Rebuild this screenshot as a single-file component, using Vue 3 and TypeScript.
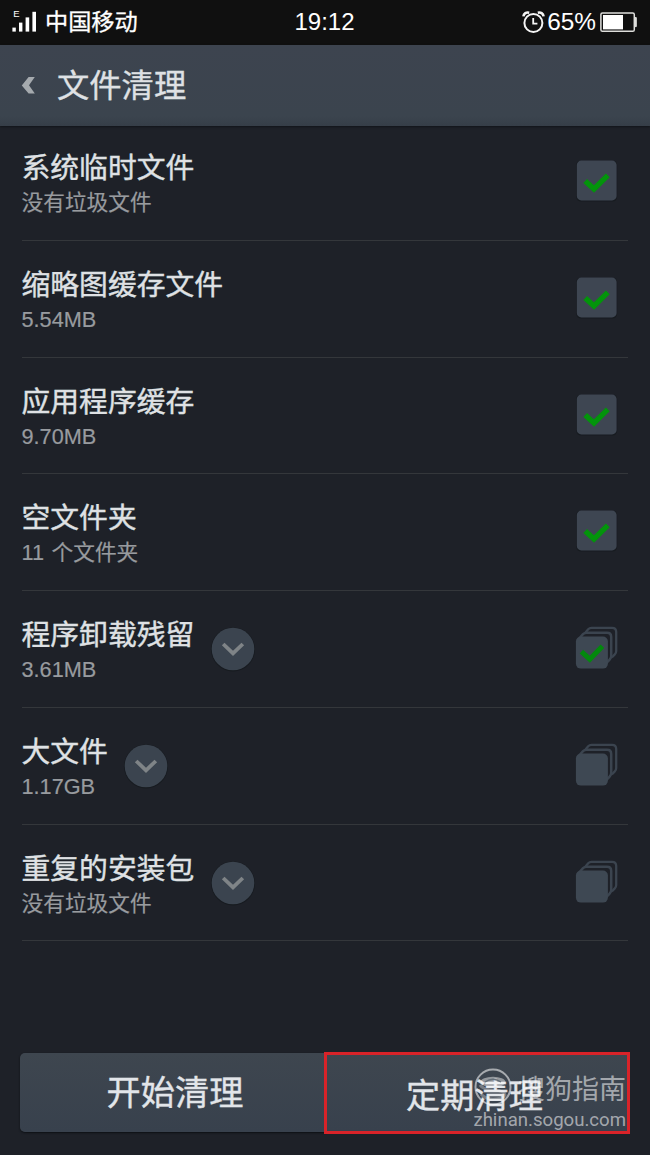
<script setup lang="ts">
interface CleanItem {
  title: string
  detail: string
  expandable: boolean
  checked: boolean
}

const items: CleanItem[] = [
  { title: '系统临时文件', detail: '没有垃圾文件', expandable: false, checked: true },
  { title: '缩略图缓存文件', detail: '5.54MB', expandable: false, checked: true },
  { title: '应用程序缓存', detail: '9.70MB', expandable: false, checked: true },
  { title: '空文件夹', detail: '11 个文件夹', expandable: false, checked: true },
  { title: '程序卸载残留', detail: '3.61MB', expandable: true, checked: true },
  { title: '大文件', detail: '1.17GB', expandable: true, checked: false },
  { title: '重复的安装包', detail: '没有垃圾文件', expandable: true, checked: false },
]
</script>

<template>
  <div class="screen">
    <header class="status">
      <div class="carrier">
        <svg class="signal" width="26" height="26" viewBox="0 0 26 26">
          <text x="2.2" y="8.4" class="network">E</text>
          <rect x="1.4" y="18.6" width="3.4" height="4" />
          <rect x="8" y="13.6" width="3.4" height="9" />
          <rect x="14.6" y="8.4" width="3.6" height="14.2" />
          <rect x="21.4" y="2.8" width="3.6" height="19.8" />
        </svg>
        <span>中国移动</span>
      </div>
      <span class="clock">19:12</span>
      <div class="power">
        <svg width="24" height="24" viewBox="0 0 24 24" fill="none" stroke="#f4f4f4">
          <circle cx="11.4" cy="13" r="9" stroke-width="2" />
          <path d="M11.2 8V13.6H15.4" stroke-width="1.8" />
          <path d="M1.4 6.4C1.8 3.4 4.2 2 7.2 2.7M21.6 6.4C21.2 3.4 18.8 2 15.8 2.7" stroke-width="2.6" />
        </svg>
        <span class="percent">65%</span>
        <svg class="battery" width="38" height="21" viewBox="0 0 38 21">
          <rect x="0.9" y="0.9" width="33.4" height="18.4" rx="1.6" fill="none" stroke="#dededb" stroke-width="1.5" />
          <rect x="3" y="3" width="20" height="14.4" fill="#fff" />
          <path d="M35 5.6H36.3V14.6H35Z" fill="#dededb" stroke="#dededb" stroke-width="1" />
        </svg>
      </div>
    </header>

    <nav class="titlebar">
      <svg width="16" height="20" viewBox="0 0 16 20">
        <path d="M7.6 1H13.8L8 9.2L13.8 17.6H7.6L0.8 9.4Z" fill="#a5aaae" />
      </svg>
      <h1>文件清理</h1>
    </nav>

    <main class="list">
      <section v-for="item in items" :key="item.title" class="row">
        <div class="copy">
          <h2>{{ item.title }}</h2>
          <p>{{ item.detail }}</p>
        </div>
        <svg v-if="item.expandable" class="expand" width="46" height="46" viewBox="0 0 46 46">
          <circle cx="23" cy="23.4" r="22" fill="#171b20" />
          <circle cx="23" cy="23" r="21.3" fill="#3b444f" />
          <path d="M13.2 18L23 27.4L32.8 18" fill="none" stroke="#7f8487" stroke-width="3.8" />
        </svg>
        <svg v-if="!item.expandable" class="check" width="44" height="44" viewBox="0 0 44 44">
          <rect x="1.2" y="1.4" width="41" height="41.2" rx="5" fill="#171b20" />
          <rect x="1.8" y="1.6" width="39.8" height="39.8" rx="4.5" fill="#3e4652" />
          <path d="M10.2 22L19 30L32.8 16.4" fill="none" stroke="#03940b" stroke-width="5.4" />
        </svg>
        <svg v-else class="check" width="44" height="44" viewBox="0 0 44 44">
          <path d="M10.5 6.5L13.2 3.2Q14.5 1.8 16.5 1.8H37Q41.2 1.8 41.2 6V25Q41.2 27 39.8 28.4L36.8 31.5" fill="none" stroke="#3b444f" stroke-width="2.3" />
          <path d="M5 11.5L8 8.2Q9.5 6.8 11.5 6.8H32Q36.2 6.8 36.2 11V30Q36.2 32 34.8 33.4L31.5 37" fill="none" stroke="#3b444f" stroke-width="2.5" />
          <rect x="0.9" y="10.6" width="32" height="32" rx="5" fill="#3e4853" />
          <path v-if="item.checked" d="M6.4 25.6L14.8 33.2L27.4 20.2" fill="none" stroke="#03890d" stroke-width="5" />
        </svg>
      </section>
    </main>

    <footer class="actions">
      <button class="start">开始清理</button>
      <button class="schedule">定期清理</button>
      <div class="watermark">
        <div class="brand">
          <svg width="38" height="38" viewBox="0 0 38 38">
            <circle cx="19" cy="19" r="17.5" fill="none" stroke="#fff" stroke-opacity="0.55" stroke-width="2" />
            <ellipse cx="19" cy="14" rx="12.5" ry="5.2" fill="#fff" fill-opacity="0.45" />
            <path d="M11 14Q19 8.5 27 14" fill="none" stroke="#646e78" stroke-width="1.5" />
            <path d="M6 17Q9 22 20 22Q31 23 31 27Q29 31 19 31Q11 31 7 26" fill="none" stroke="#fff" stroke-opacity="0.3" stroke-width="3" />
          </svg>
          <span>搜狗指南</span>
        </div>
        <div class="site">zhinan.sogou.com</div>
      </div>
    </footer>
  </div>
</template>

<style>
body {
  margin: 0;
  background: #1e2128;
}
</style>

<style scoped>
.screen {
  display: flex;
  flex-direction: column;
  width: 650px;
  height: 1155px;
  overflow: hidden;
  background: #1e2128;
  color: #dfe1e4;
  font-family: "Liberation Sans", "Noto Sans CJK SC", sans-serif;
}
.status {
  display: grid;
  grid-template-columns: 1fr auto 1fr;
  align-items: center;
  box-sizing: border-box;
  height: 45px;
  padding: 0 12px 1px 11px;
  background: #101010;
  color: #fff;
  font-size: 23.2px;
  line-height: 32px;
}
.carrier,
.power {
  display: flex;
  align-items: center;
}
.carrier {
  gap: 8px;
  -webkit-text-stroke: 0.3px currentColor;
}
.signal {
  fill: #fff;
}
.network {
  font-size: 9.5px;
}
.clock {
  font-size: 24px;
}
.power {
  justify-content: flex-end;
}
.percent {
  margin: 0 4px 0 1px;
  font-size: 24.4px;
}
.titlebar {
  display: flex;
  align-items: center;
  gap: 20px;
  box-sizing: border-box;
  height: 81px;
  padding-left: 21px;
  background: linear-gradient(#3d444f, #3b444e 88%, #363e48);
  box-shadow: 0 1px 2px #111419;
}
h1,
h2,
p {
  margin: 0;
  font-weight: 400;
}
h1 {
  font-size: 32.3px;
  line-height: 46px;
  -webkit-text-stroke: 0.35px currentColor;
}
.list {
  flex: 1;
  padding: 0 22px;
  margin-top: -1.6px;
}
.row {
  display: flex;
  align-items: flex-start;
  box-sizing: border-box;
  height: 116.7px;
  padding-top: 22px;
  border-bottom: 1px solid #34373b;
}
.copy {
  padding-top: 2px;
}
.copy h2 {
  margin-left: -0.5px;
  font-size: 28.8px;
  line-height: 40px;
  -webkit-text-stroke: 0.4px currentColor;
}
.copy p {
  margin-left: -0.5px;
  color: #989b9f;
  font-size: 21.7px;
  line-height: 30px;
  word-spacing: 1.5px;
  -webkit-text-stroke: 0.2px currentColor;
}
.expand {
  margin: 13px 0 0 15.5px;
}
.check {
  margin: 13px 9px 0 auto;
}
.actions {
  position: relative;
  display: flex;
  box-sizing: border-box;
  height: 103px;
  padding: 1px 20px 22px;
}
button {
  flex: 1;
  box-sizing: border-box;
  height: 79px;
  padding: 0;
  border: 0;
  background: linear-gradient(#3e464f, #38414d);
  box-shadow: 0 1px 2px #0d1014;
  color: #e2e5e9;
  font-family: inherit;
  font-size: 34.2px;
  line-height: 50px;
  -webkit-text-stroke: 0.35px currentColor;
}
.start {
  flex: 0 0 305px;
  padding: 1px 0 0 5px;
  border-radius: 5px 0 0 5px;
}
.schedule {
  height: 82px;
  margin: -1px 0 0 -1px;
  padding: 5px 5px 0 0;
  border: 3px solid #d92329;
  box-shadow: none;
}
.watermark {
  position: absolute;
  top: 14px;
  right: 24px;
  color: rgba(255, 255, 255, 0.55);
}
.brand {
  display: flex;
  align-items: center;
  justify-content: flex-end;
  gap: 6px;
  height: 42px;
  font-size: 27px;
}
.site {
  font-family: Roboto, sans-serif;
  font-size: 18.6px;
  line-height: 24px;
  text-align: right;
}
</style>
